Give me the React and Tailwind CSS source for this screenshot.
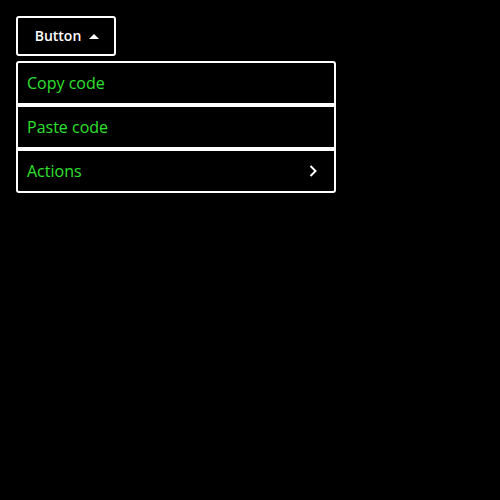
import React from "react";

const items = ["Copy code", "Paste code", "Actions"];

export default function App() {
  return (
    <div className="min-h-screen bg-black p-4" style={{ fontFamily: '"Open Sans", sans-serif' }}>
      <button
        type="button"
        className="flex h-10 w-[100px] items-center justify-center gap-2 rounded-[3px] border-2 border-white pl-[2px] text-sm font-semibold text-white"
      >
        Button
        <svg width="10" height="6" viewBox="0 0 10 6" className="mb-[1px]">
          <path d="M0 6 L5 1 L10 6 Z" fill="white" />
        </svg>
      </button>
      <div className="mt-[5px] flex w-[320px] flex-col divide-y-4 divide-white rounded-[3px] border-2 border-white">
        {items.map((label) => (
          <div
            key={label}
            className="flex items-center justify-between px-[9px] py-2 text-base leading-6 text-[#2fe02f]"
          >
            <span>{label}</span>
            {label === "Actions" && (
              <svg width="8" height="12" viewBox="0 0 8 12" className="mr-[8px]">
                <path d="M1.5 1 L6.5 6 L1.5 11" fill="none" stroke="white" strokeWidth="2" />
              </svg>
            )}
          </div>
        ))}
      </div>
    </div>
  );
}
